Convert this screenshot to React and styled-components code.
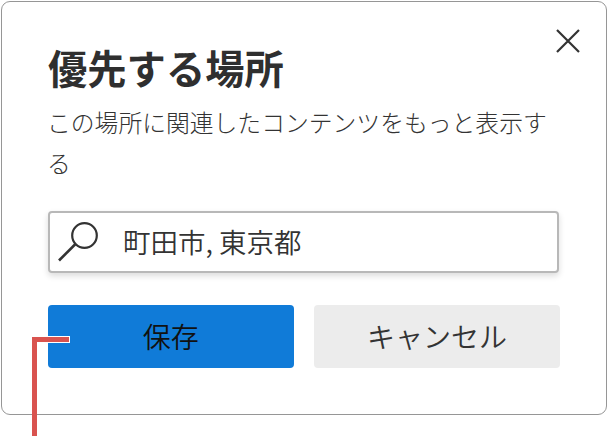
import React from 'react';
import styled, { createGlobalStyle } from 'styled-components';

const GlobalStyle = createGlobalStyle`
  html, body {
    margin: 0;
    padding: 0;
    background: #ffffff;
  }
  body {
    width: 607px;
    height: 436px;
    overflow: hidden;
    font-family: "Noto Sans CJK JP", "Liberation Sans", sans-serif;
  }
`;

export default function App() {
  return (
    <Page>
      <GlobalStyle />
      <Dialog>
        <CloseButton aria-label="閉じる">
          <svg width="26" height="26" viewBox="0 0 26 26" fill="none" stroke="#333" strokeWidth="2.2">
            <path d="M2 2L24 24M24 2L2 24" />
          </svg>
        </CloseButton>
        <Title>優先する場所</Title>
        <Description>この場所に関連したコンテンツをもっと表示する</Description>
        <SearchBox>
          <svg width="42" height="42" viewBox="0 0 42 42" fill="none" stroke="#333" strokeWidth="2.2">
            <circle cx="26.5" cy="14.5" r="12.3" />
            <path d="M17.5 23L1 39.5" strokeWidth="2.6" />
          </svg>
          <SearchText>町田市, 東京都</SearchText>
        </SearchBox>
        <Buttons>
          <Button $primary>保存</Button>
          <Button>キャンセル</Button>
        </Buttons>
      </Dialog>
      <Callout />
    </Page>
  );
}

const Page = styled.div`
  position: relative;
  width: 607px;
  height: 436px;
  padding: 1px;
  box-sizing: border-box;
`;

const Dialog = styled.div`
  position: relative;
  width: 606px;
  height: 414px;
  box-sizing: border-box;
  padding: 40px 46px 0 46px;
  background: #ffffff;
  border: 1px solid #969696;
  border-radius: 9px;
`;

const CloseButton = styled.button`
  position: absolute;
  top: 26px;
  right: 25px;
  display: flex;
  padding: 0;
  background: none;
  border: none;
`;

const Title = styled.h1`
  margin: 0;
  font-size: 39.3px;
  line-height: 50px;
  font-weight: 700;
  color: #2f2f2f;
`;

const Description = styled.p`
  margin: 9px 0 0 -1px;
  width: 507px;
  font-size: 23.8px;
  line-height: 41px;
  font-weight: 300;
  color: #333333;
`;

const SearchBox = styled.div`
  display: flex;
  align-items: center;
  gap: 23px;
  box-sizing: border-box;
  width: 511px;
  height: 62px;
  margin-top: 28px;
  padding: 0 8px;
  background: #ffffff;
  border: 2px solid #b8b8b8;
  border-radius: 4px;
  box-shadow: 0 3px 6px rgba(0, 0, 0, 0.14);
`;

const SearchText = styled.span`
  font-size: 27.5px;
  line-height: 36px;
  padding-bottom: 2px;
  color: #333333;
  font-weight: 350;
`;

const Buttons = styled.div`
  display: flex;
  gap: 20.5px;
  margin-top: 32px;
`;

const Button = styled.button`
  width: 246px;
  height: 63px;
  padding: 0 0 2px;
  border: none;
  border-radius: 4px;
  font-family: inherit;
  font-size: 28px;
  font-weight: 350;
  color: ${p => (p.$primary ? '#111111' : '#333333')};
  background: ${p => (p.$primary ? '#107bd8' : '#ececec')};
`;

// red annotation line that points at the save button
const Callout = styled.div`
  position: absolute;
  left: 32px;
  top: 337px;
  width: 38px;
  height: 99px;
  box-sizing: border-box;
  border-left: 5px solid #d9534f;
  border-top: 5px solid #d9534f;

  &::after {
    content: '';
    position: absolute;
    top: -6px;
    left: 11px;
    width: 22px;
    height: 7px;
    box-sizing: border-box;
    border: solid #ffffff;
    border-width: 1px 1px 1px 0;
  }
`;
